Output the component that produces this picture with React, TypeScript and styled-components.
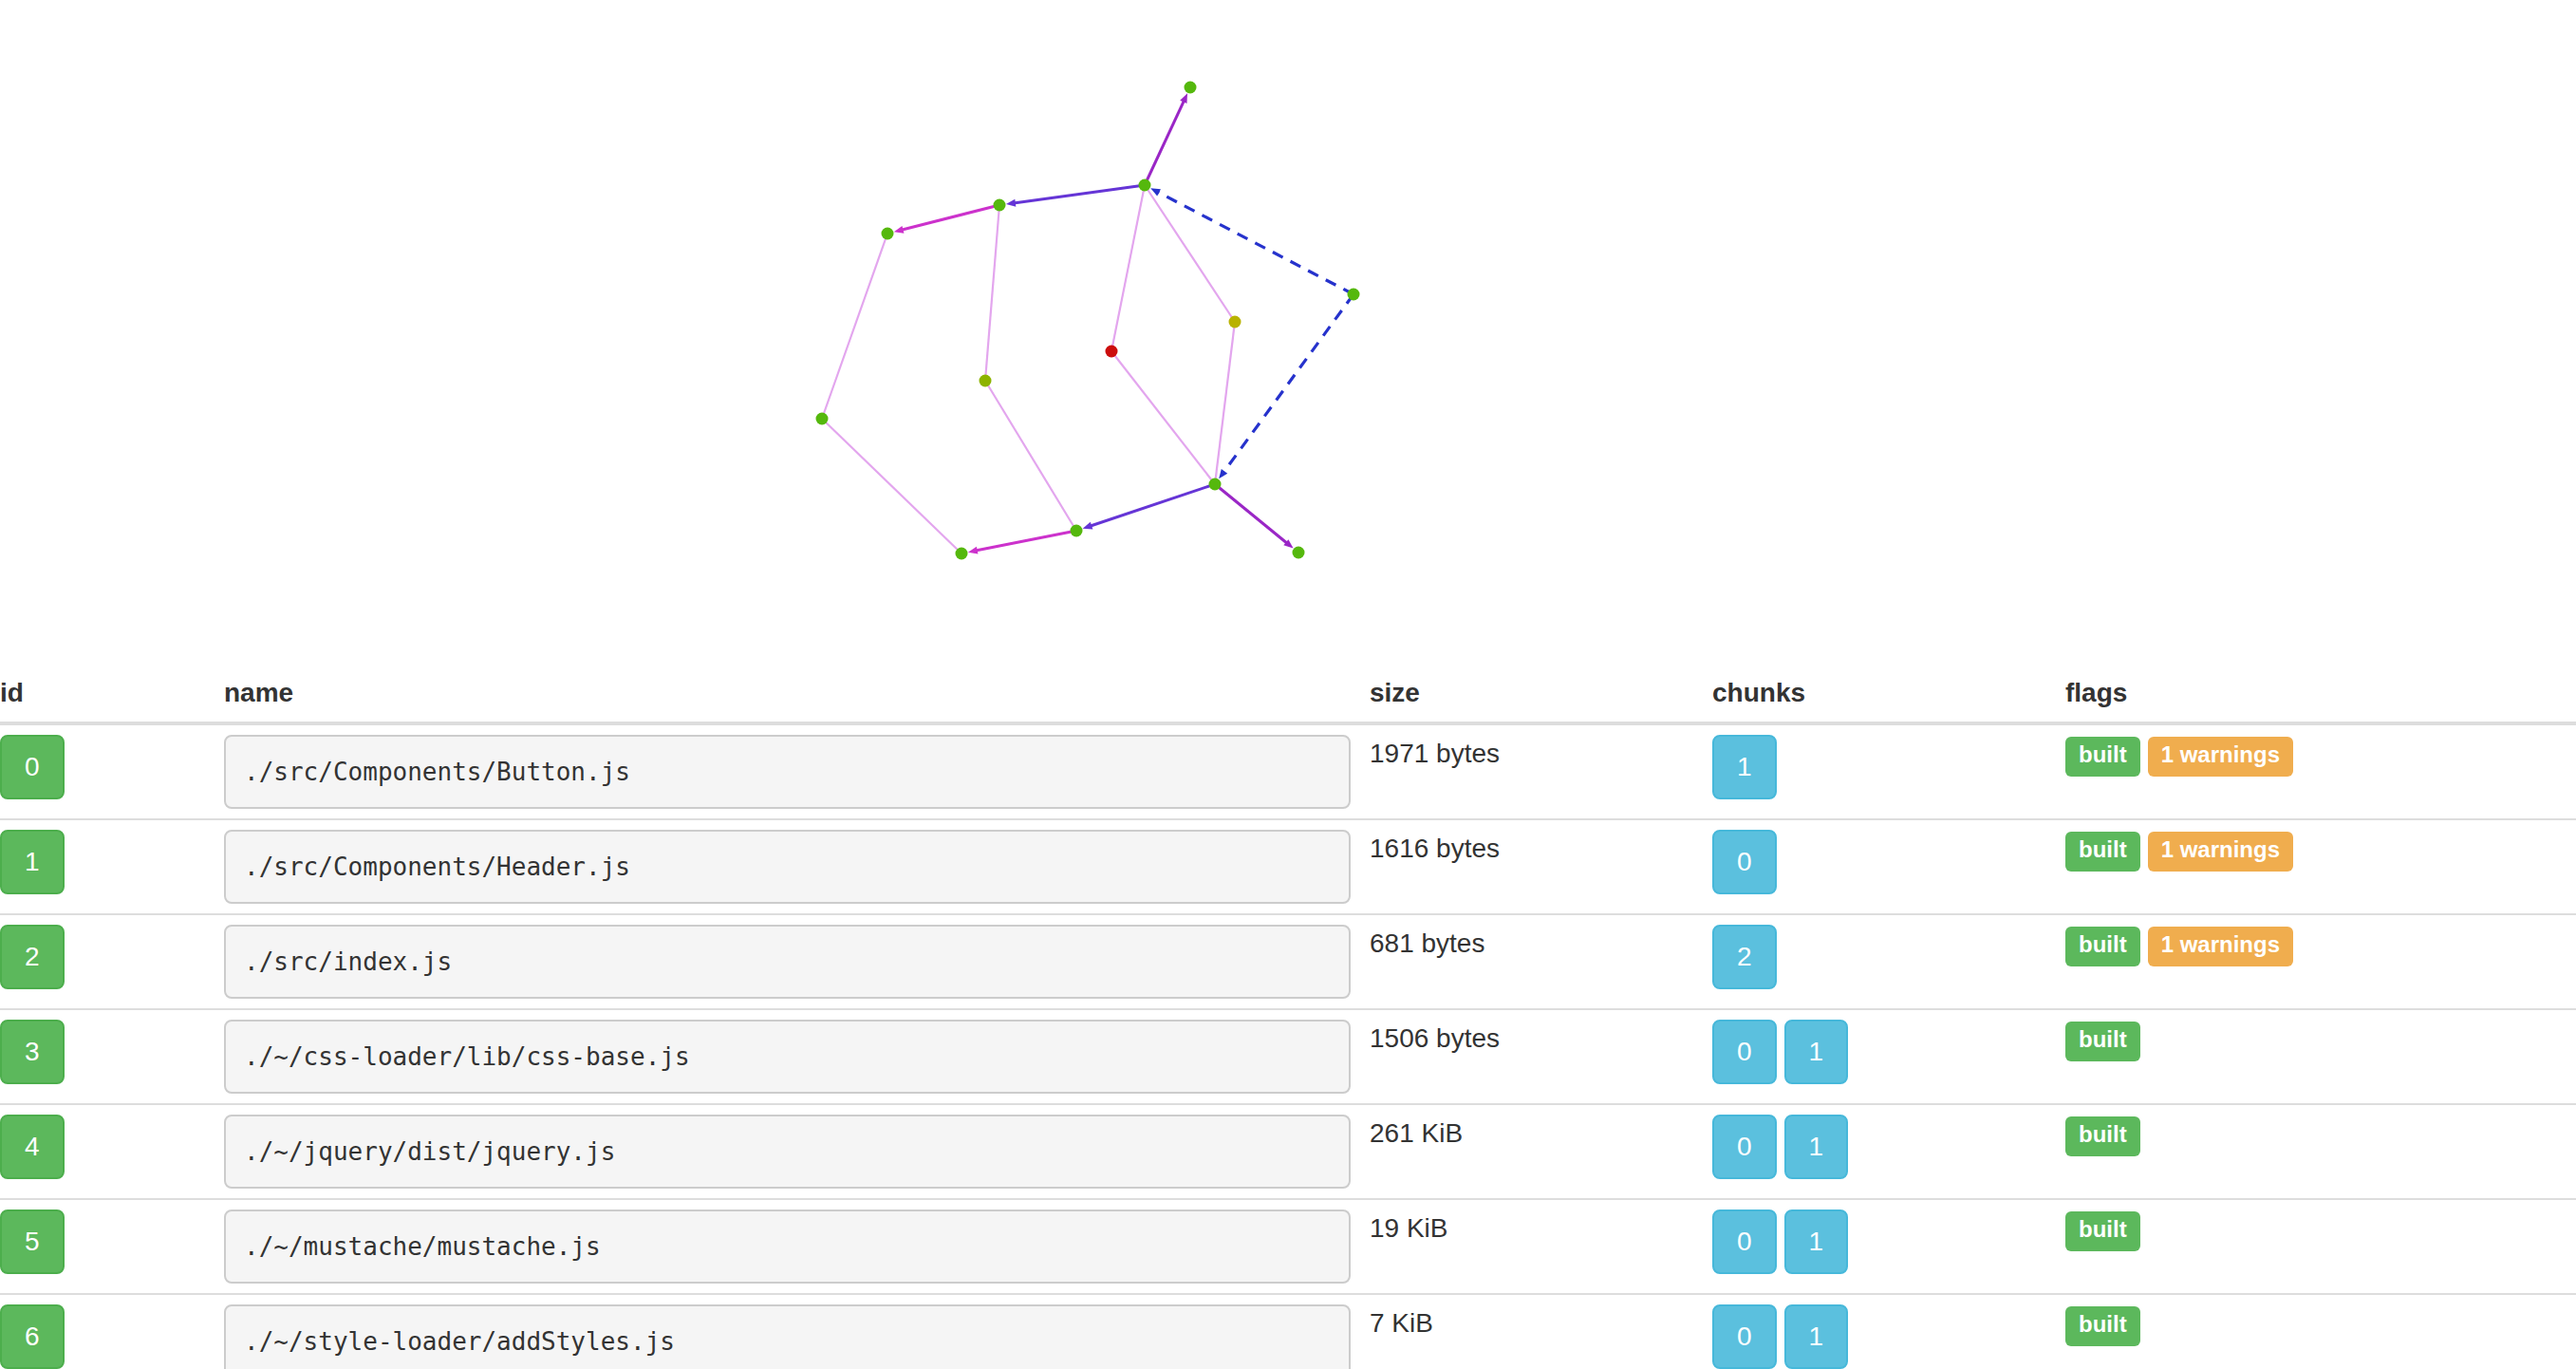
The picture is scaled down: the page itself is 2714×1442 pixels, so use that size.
import React from "react";
import styled, { createGlobalStyle } from "styled-components";

const GlobalStyle = createGlobalStyle`
  html, body {
    margin: 0;
    padding: 0;
    background: #ffffff;
    overflow: hidden;
    scrollbar-width: none;
  }
  body::-webkit-scrollbar { display: none; }
  body {
    font-family: "Liberation Sans", Arial, sans-serif;
    font-size: 28px;
    line-height: 40px;
    color: #333333;
  }
`;

const Page = styled.div`
  width: 100%;
  display: flex;
  flex-direction: column;
`;

const GraphArea = styled.div`
  height: 700px;
  width: 100%;
`;

const GraphSvg = styled.svg`
  display: block;
  width: 2714px;
  height: 700px;
`;

const ModuleTable = styled.table`
  width: 100%;
  table-layout: fixed;
  border-collapse: collapse;
  border-spacing: 0;
`;

const HeadCell = styled.th<{ $first?: boolean }>`
  text-align: left;
  font-weight: bold;
  font-size: 28px;
  line-height: 40px;
  padding: 10px 10px 10px ${(p) => (p.$first ? "0" : "10px")};
  border-bottom: 4px solid #dddddd;
  vertical-align: bottom;
  color: #333333;
`;

const Cell = styled.td<{ $first?: boolean }>`
  padding: 10px 10px 10px ${(p) => (p.$first ? "0" : "10px")};
  border-top: 2px solid #dddddd;
  vertical-align: top;
  font-size: 28px;
  line-height: 40px;
`;

const Btn = styled.span<{ $variant: "success" | "info" }>`
  display: inline-block;
  box-sizing: border-box;
  padding: 12px 24px;
  border: 2px solid ${(p) => (p.$variant === "success" ? "#4cae4c" : "#46b8da")};
  background: ${(p) => (p.$variant === "success" ? "#5cb85c" : "#5bc0de")};
  color: #ffffff;
  font-size: 28px;
  line-height: 40px;
  border-radius: 8px;
  vertical-align: top;
  text-align: center;
`;

const ChunkList = styled.div`
  display: flex;
  gap: 8px;
  align-items: flex-start;
`;

const FlagList = styled.div`
  display: flex;
  gap: 8px;
  align-items: flex-start;
  padding-top: 2px;
`;

const Label = styled.span<{ $kind: "success" | "warning" }>`
  display: inline-block;
  padding: 7px 14px 11px;
  font-size: 24px;
  line-height: 24px;
  font-weight: bold;
  color: #ffffff;
  border-radius: 6px;
  background: ${(p) => (p.$kind === "success" ? "#5cb85c" : "#f0ad4e")};
  white-space: nowrap;
`;

const NamePre = styled.pre`
  margin: 0;
  padding: 19px;
  font-family: "DejaVu Sans Mono", "Liberation Mono", monospace;
  font-size: 26px;
  line-height: 36px;
  color: #333333;
  background: #f5f5f5;
  border: 2px solid #cccccc;
  border-radius: 8px;
  white-space: pre;
  overflow: hidden;
`;

type Mod = {
  id: number;
  name: string;
  size: string;
  chunks: number[];
  warnings?: number;
};

const modules: Mod[] = [
  { id: 0, name: "./src/Components/Button.js", size: "1971 bytes", chunks: [1], warnings: 1 },
  { id: 1, name: "./src/Components/Header.js", size: "1616 bytes", chunks: [0], warnings: 1 },
  { id: 2, name: "./src/index.js", size: "681 bytes", chunks: [2], warnings: 1 },
  { id: 3, name: "./~/css-loader/lib/css-base.js", size: "1506 bytes", chunks: [0, 1] },
  { id: 4, name: "./~/jquery/dist/jquery.js", size: "261 KiB", chunks: [0, 1] },
  { id: 5, name: "./~/mustache/mustache.js", size: "19 KiB", chunks: [0, 1] },
  { id: 6, name: "./~/style-loader/addStyles.js", size: "7 KiB", chunks: [0, 1] },
];

type P = [number, number];
const N: Record<string, P> = {
  A: [1254, 92],
  B: [1206, 195],
  C: [1053, 216],
  D: [935, 246],
  E: [866, 441],
  F: [1038, 401],
  G: [1171, 370],
  H: [1301, 339],
  I: [1426, 310],
  J: [1280, 510],
  K: [1134, 559],
  L: [1013, 583],
  M: [1368, 582],
};

const nodeColor: Record<string, string> = {
  F: "#8db300",
  G: "#cc0a0a",
  H: "#b9b200",
};

type Edge = {
  s: string;
  t: string;
  color: string;
  w: number;
  arrow?: boolean;
  dash?: string;
};

const PURPLE = "#9a26c6";
const VIOLET = "#6535d6";
const MAGENTA = "#cc30cc";
const LIGHT = "#e3a6ee";
const BLUE = "#2633cc";

const edges: Edge[] = [
  { s: "D", t: "E", color: LIGHT, w: 2.2 },
  { s: "E", t: "L", color: LIGHT, w: 2.2 },
  { s: "C", t: "F", color: LIGHT, w: 2.2 },
  { s: "F", t: "K", color: LIGHT, w: 2.2 },
  { s: "B", t: "G", color: LIGHT, w: 2.2 },
  { s: "G", t: "J", color: LIGHT, w: 2.2 },
  { s: "B", t: "H", color: LIGHT, w: 2.2 },
  { s: "H", t: "J", color: LIGHT, w: 2.2 },
  { s: "B", t: "A", color: PURPLE, w: 3, arrow: true },
  { s: "B", t: "C", color: VIOLET, w: 3, arrow: true },
  { s: "C", t: "D", color: MAGENTA, w: 3, arrow: true },
  { s: "J", t: "K", color: VIOLET, w: 3, arrow: true },
  { s: "K", t: "L", color: MAGENTA, w: 3, arrow: true },
  { s: "J", t: "M", color: PURPLE, w: 3, arrow: true },
  { s: "I", t: "B", color: BLUE, w: 3.2, arrow: true, dash: "12 9" },
  { s: "I", t: "J", color: BLUE, w: 3.2, arrow: true, dash: "12 9" },
];

function EdgeShape({ e }: { e: Edge }) {
  const [x1, y1] = N[e.s];
  const [x2, y2] = N[e.t];
  const dx = x2 - x1;
  const dy = y2 - y1;
  const len = Math.hypot(dx, dy);
  const ux = dx / len;
  const uy = dy / len;
  const tipX = x2 - ux * 7;
  const tipY = y2 - uy * 7;
  const baseX = tipX - ux * 10;
  const baseY = tipY - uy * 10;
  const px = -uy * 4;
  const py = ux * 4;
  const endX = e.arrow ? baseX + ux * 2 : x2;
  const endY = e.arrow ? baseY + uy * 2 : y2;
  return (
    <g>
      <line
        x1={x1}
        y1={y1}
        x2={endX}
        y2={endY}
        stroke={e.color}
        strokeWidth={e.w}
        strokeDasharray={e.dash}
        strokeLinecap="butt"
      />
      {e.arrow && (
        <polygon
          points={`${tipX},${tipY} ${baseX + px},${baseY + py} ${baseX - px},${baseY - py}`}
          fill={e.color}
        />
      )}
    </g>
  );
}

function DependencyGraph() {
  return (
    <GraphSvg viewBox="0 0 2714 700" xmlns="http://www.w3.org/2000/svg">
      <defs>
        <filter id="soft" x="-5%" y="-5%" width="110%" height="110%">
          <feGaussianBlur stdDeviation="0.6" />
        </filter>
      </defs>
      <g filter="url(#soft)">
        {edges.map((e, i) => (
          <EdgeShape key={i} e={e} />
        ))}
        {Object.entries(N).map(([k, [x, y]]) => (
          <circle key={k} cx={x} cy={y} r={6.5} fill={nodeColor[k] || "#55b80e"} />
        ))}
      </g>
    </GraphSvg>
  );
}

export default function App() {
  return (
    <Page>
      <GlobalStyle />
      <GraphArea>
        <DependencyGraph />
      </GraphArea>
      <ModuleTable>
        <colgroup>
          <col style={{ width: 226 }} />
          <col style={{ width: 1207 }} />
          <col style={{ width: 361 }} />
          <col style={{ width: 372 }} />
          <col />
        </colgroup>
        <thead>
          <tr>
            <HeadCell $first>id</HeadCell>
            <HeadCell>name</HeadCell>
            <HeadCell>size</HeadCell>
            <HeadCell>chunks</HeadCell>
            <HeadCell>flags</HeadCell>
          </tr>
        </thead>
        <tbody>
          {modules.map((m) => (
            <tr key={m.id}>
              <Cell $first>
                <Btn $variant="success">{m.id}</Btn>
              </Cell>
              <Cell>
                <NamePre>{m.name}</NamePre>
              </Cell>
              <Cell>{m.size}</Cell>
              <Cell>
                <ChunkList>
                  {m.chunks.map((c) => (
                    <Btn key={c} $variant="info">
                      {c}
                    </Btn>
                  ))}
                </ChunkList>
              </Cell>
              <Cell>
                <FlagList>
                  <Label $kind="success">built</Label>
                  {m.warnings ? <Label $kind="warning">{m.warnings} warnings</Label> : null}
                </FlagList>
              </Cell>
            </tr>
          ))}
        </tbody>
      </ModuleTable>
    </Page>
  );
}
